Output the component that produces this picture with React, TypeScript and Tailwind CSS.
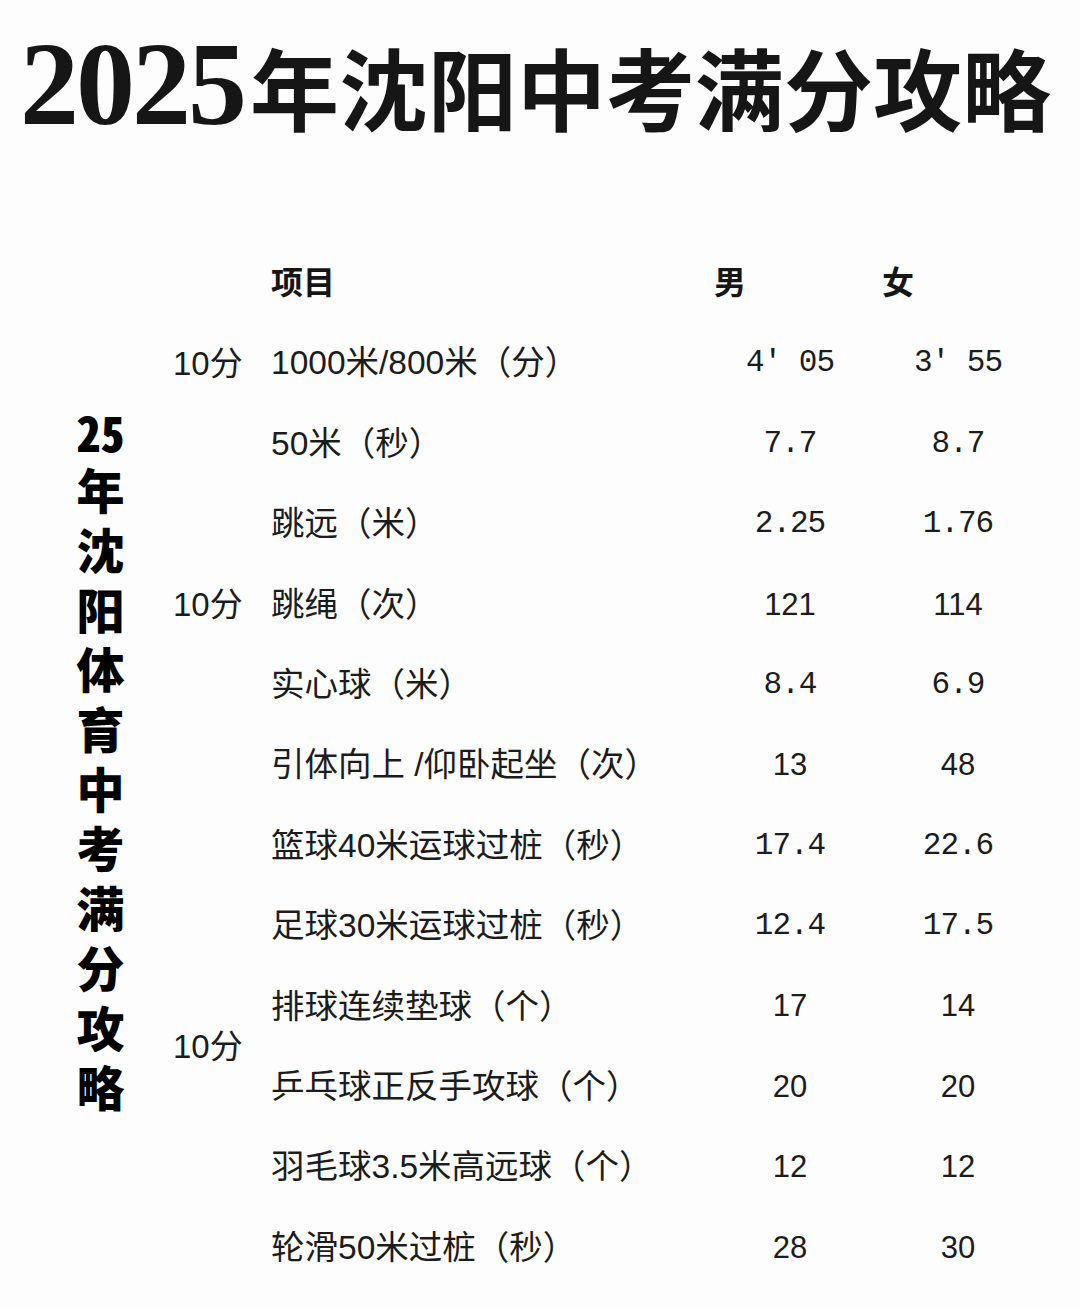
const rows: { name: string; male: string; female: string }[] = [
  { name: '1000米/800米（分）', male: "4′ 05", female: "3′ 55" },
  { name: '50米（秒）', male: '7.7', female: '8.7' },
  { name: '跳远（米）', male: '2.25', female: '1.76' },
  { name: '跳绳（次）', male: '121', female: '114' },
  { name: '实心球（米）', male: '8.4', female: '6.9' },
  { name: '引体向上 /仰卧起坐（次）', male: '13', female: '48' },
  { name: '篮球40米运球过桩（秒）', male: '17.4', female: '22.6' },
  { name: '足球30米运球过桩（秒）', male: '12.4', female: '17.5' },
  { name: '排球连续垫球（个）', male: '17', female: '14' },
  { name: '乒乓球正反手攻球（个）', male: '20', female: '20' },
  { name: '羽毛球3.5米高远球（个）', male: '12', female: '12' },
  { name: '轮滑50米过桩（秒）', male: '28', female: '30' },
];

const cjkFont = "font-['Liberation_Sans','Noto_Sans_CJK_SC',sans-serif]";

function Value({ v }: { v: string }) {
  const mono = v.includes('.') || v.includes('′');
  return (
    <div
      className={`flex h-[80.4px] items-center justify-center text-[31px] text-[#1c1c1c] ${
        mono ? "font-['Liberation_Mono',monospace] tracking-[-1px]" : "font-['Liberation_Sans',sans-serif]"
      }`}
    >
      {v}
    </div>
  );
}

export default function App() {
  return (
    <div className="h-[1309px] w-[1080px] overflow-hidden bg-[#fdfdfd] text-[#161616]">
      {/* Title */}
      <div className="flex h-[170px] items-center pl-[20px]">
        <h1 className="flex items-center leading-none">
          <span className="font-['Liberation_Serif',serif] text-[118px] font-bold tracking-[-3px]">2025</span>
          <span className="ml-[6px] font-['Noto_Sans_CJK_SC',sans-serif] text-[89px] font-bold">
            年沈阳中考满分攻略
          </span>
        </h1>
      </div>

      {/* Body */}
      <div className="mt-[73px] flex">
        <div className="flex w-[173px] justify-center pt-[164px] pl-[28px]">
          <div className="font-['Noto_Sans_CJK_SC',sans-serif] text-[48px] font-black leading-none tracking-[11.7px] text-black [writing-mode:vertical-rl]">
            <span className="me-[12px] [text-combine-upright:all]">25</span>年沈阳体育中考满分攻略
          </div>
        </div>

        <div className={`grid grid-cols-[98px_434px_170px_166px] grid-rows-[repeat(13,80.4px)] ${cjkFont}`}>
          {/* header */}
          <div className="col-start-2 row-start-1 flex items-center text-[32px] font-bold">项目</div>
          <div className="col-start-3 row-start-1 flex items-center pl-[9px] text-[32px] font-bold">男</div>
          <div className="col-start-4 row-start-1 flex items-center pl-[7px] text-[32px] font-bold">女</div>

          {/* score groups */}
          <div className="col-start-1 row-start-2 flex items-center text-[33px] text-[#1c1c1c]">10分</div>
          <div className="col-start-1 row-start-5 flex items-center text-[33px] text-[#1c1c1c]">10分</div>
          <div className="col-start-1 row-start-10 row-span-2 flex items-center text-[33px] text-[#1c1c1c]">
            10分
          </div>

          {rows.map((r, i) => (
            <div key={r.name} className="contents">
              <div
                className="col-start-2 flex h-[80.4px] items-center whitespace-nowrap text-[33.5px] text-[#1c1c1c]"
                style={{ gridRowStart: i + 2 }}
              >
                {r.name}
              </div>
              <div className="col-start-3" style={{ gridRowStart: i + 2 }}>
                <Value v={r.male} />
              </div>
              <div className="col-start-4" style={{ gridRowStart: i + 2 }}>
                <Value v={r.female} />
              </div>
            </div>
          ))}
        </div>
      </div>
    </div>
  );
}
